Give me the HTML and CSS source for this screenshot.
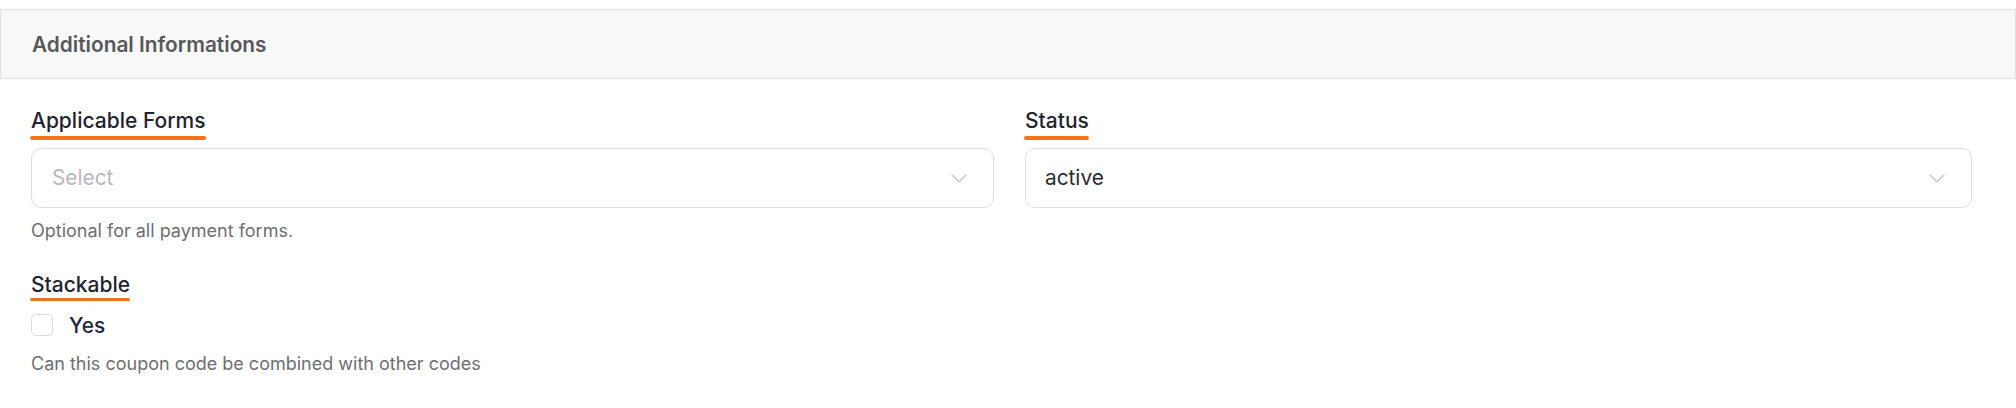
FILE: index.html
```html
<!DOCTYPE html>
<html lang="en">
<head>
<meta charset="utf-8">
<title>Additional Informations</title>
<link rel="stylesheet" href="styles.css">
</head>
<body>
<div class="page">
  <div class="card-header">Additional Informations</div>
  <div class="card-body">
    <div class="grid">
      <div class="field">
        <label class="label">Applicable Forms</label>
        <div class="select">
          <span class="placeholder">Select</span>
          <svg class="chevron" width="16" height="9" viewBox="0 0 16 9"><polyline points="1,1 8,7.8 15,1" fill="none" stroke="#c2c2c6" stroke-width="1.3" stroke-linecap="round" stroke-linejoin="round"/></svg>
        </div>
        <p class="help first-help">Optional for all payment forms.</p>
      </div>
      <div class="field">
        <label class="label">Status</label>
        <div class="select">
          <span class="value">active</span>
          <svg class="chevron" width="16" height="9" viewBox="0 0 16 9"><polyline points="1,1 8,7.8 15,1" fill="none" stroke="#c2c2c6" stroke-width="1.3" stroke-linecap="round" stroke-linejoin="round"/></svg>
        </div>
      </div>
    </div>
    <div class="field stack-field">
      <label class="label small-gap">Stackable</label>
      <div class="check-row">
        <span class="checkbox"></span>
        <span class="check-text">Yes</span>
      </div>
      <p class="help second-help">Can this coupon code be combined with other codes</p>
    </div>
  </div>
</div>
</body>
</html>
```
FILE: styles.css
```css
* { box-sizing: border-box; }
html, body { margin: 0; padding: 0; background: #ffffff; }
body {
  font-family: Inter, "Noto Sans", "Liberation Sans", sans-serif;
  color: #1f2330;
}
.page { padding-top: 9px; }
.card-header {
  height: 70px;
  border: 1px solid #e1e1e3;
  background: #f9f9f9;
  display: flex;
  align-items: center;
  padding: 0 31px;
  font-size: 20.8px;
  font-weight: 600;
  color: #58585c;
}
.card-body { padding: 28px 44px 0 31px; }
.grid {
  display: grid;
  grid-template-columns: 963px 947px;
  column-gap: 31px;
}
.field { display: flex; flex-direction: column; align-items: flex-start; }
.label {
  display: inline-block;
  font-size: 21px;
  line-height: 28px;
  font-weight: 500;
  color: #1f2330;
  padding-right: 5px;
}
.label::after {
  content: "";
  display: block;
  height: 3.5px;
  margin-top: 1px;
  margin-left: -1px;
  border-radius: 2px;
  background: #f97316;
}
.label.small-gap { line-height: 24px; }
.select {
  margin-top: 8px;
  width: 100%;
  height: 60px;
  border: 1px solid #dedee0;
  border-radius: 10px;
  display: flex;
  align-items: center;
  justify-content: space-between;
  padding: 0 26px 0 20px;
  font-size: 20.8px;
}
.placeholder { color: #b7b7bd; }
.value { color: #2a2b33; margin-left: -1px; }
.chevron { display: block; margin-top: 1px; }
.help {
  margin: 0;
  font-size: 18px;
  line-height: 24px;
  color: #6e6e73;
}
.first-help { margin-top: 11px; }
.stack-field { margin-top: 30px; }
.check-row {
  margin-top: 11px;
  display: flex;
  align-items: flex-start;
  gap: 16px;
}
.checkbox {
  width: 22px;
  height: 22px;
  margin-top: 2px;
  border: 1px solid #dcdcde;
  border-radius: 5px;
  background: #fff;
}
.check-text {
  font-size: 20.8px;
  line-height: 28px;
  font-weight: 500;
  color: #1f2340;
}
.second-help { margin-top: 12px; }
```
